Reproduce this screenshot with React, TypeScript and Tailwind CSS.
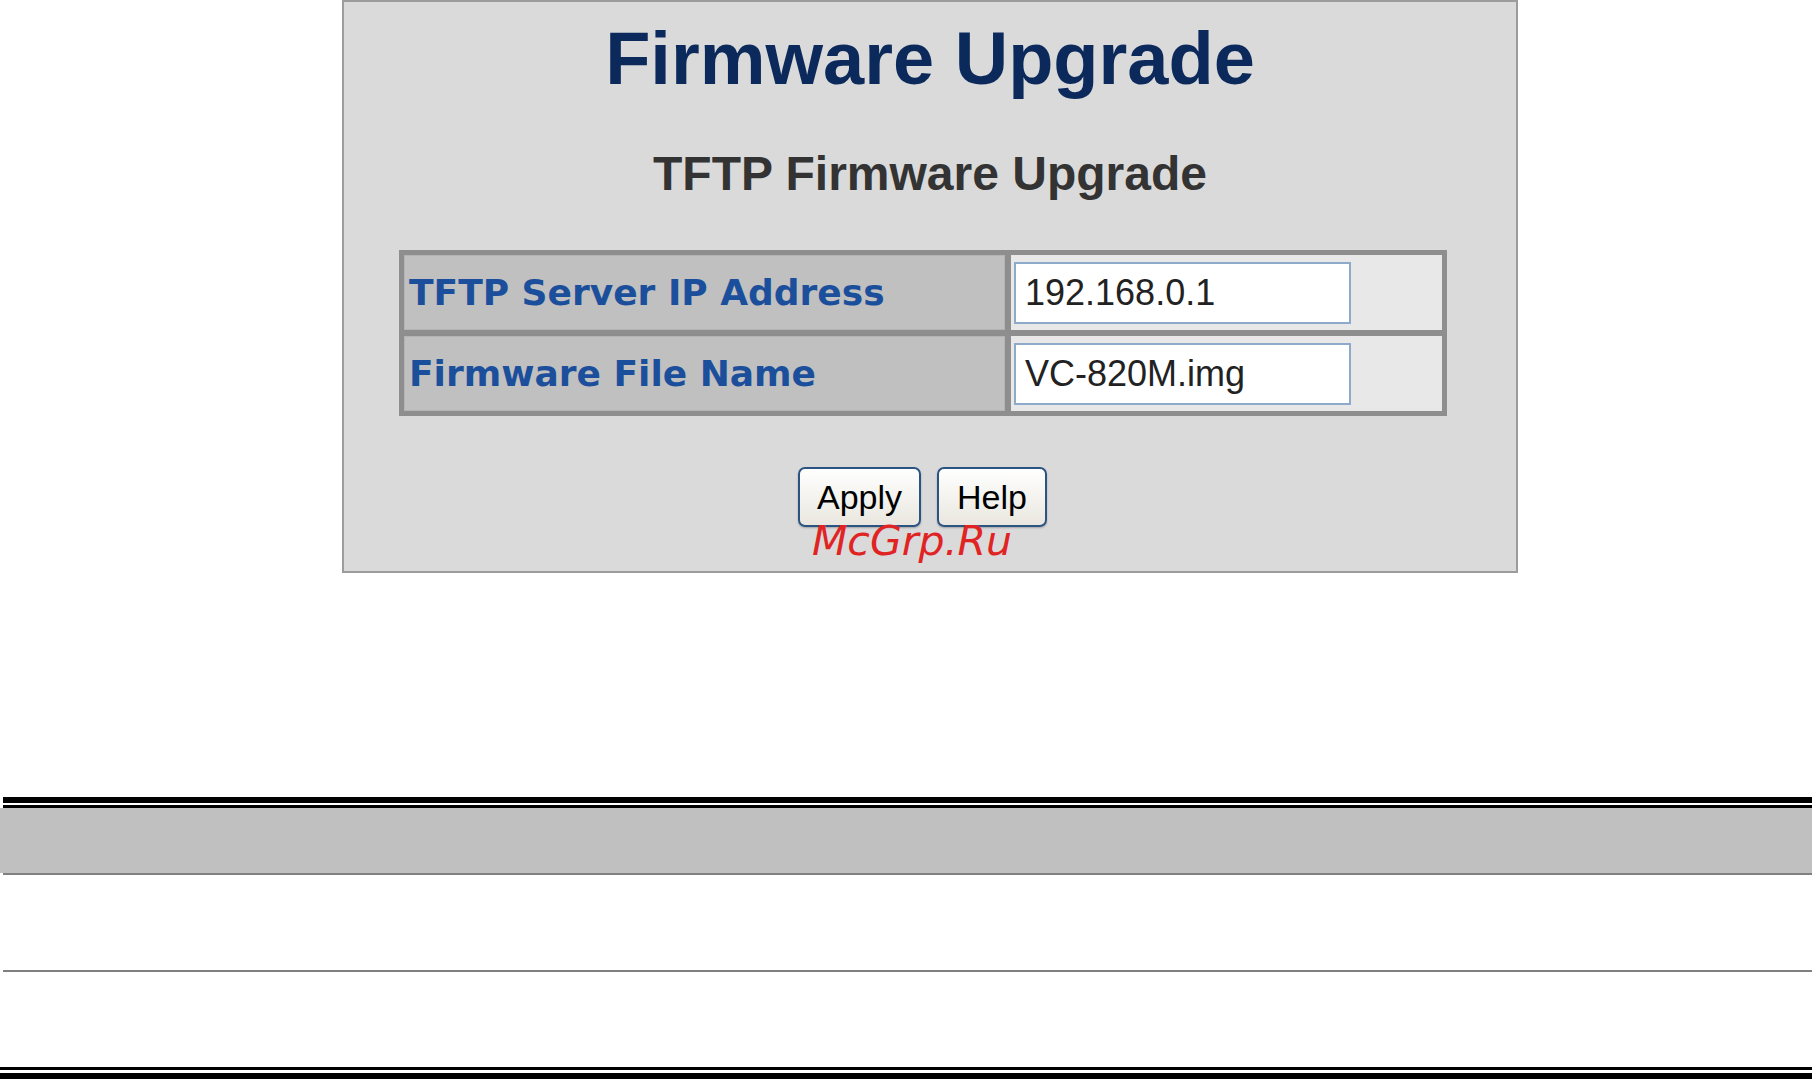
const rows = [
  { label: 'TFTP Server IP Address', value: '192.168.0.1' },
  { label: 'Firmware File Name', value: 'VC-820M.img' },
];

const FormRow = ({ label, value }: { label: string; value: string }) => (
  <>
    <div className="flex h-[75px] items-center border border-[#b4b4b4] bg-[#c0c0c0] pl-[4px]">
      <span className="font-['DejaVu_Sans',sans-serif] text-[36px] font-bold leading-none text-[#1b4f9c]">
        {label}
      </span>
    </div>
    <div className="flex h-[75px] items-center bg-[#e8e8e8] pl-[3px]">
      <input
        readOnly
        defaultValue={value}
        className="h-[62px] w-[337px] border-2 border-[#8eaacb] bg-white pl-[9px] font-['Liberation_Sans',Arial,sans-serif] text-[36px] leading-none text-[#222] outline-none"
      />
    </div>
  </>
);

const Button = ({ text, width }: { text: string; width: string }) => (
  <button
    className={`${width} h-[60px] rounded-[7px] border-2 border-[#2b5482] bg-gradient-to-b from-white to-[#e9e7df] font-['Liberation_Sans',Arial,sans-serif] text-[34px] leading-none text-black shadow-[0_1px_2px_rgba(0,0,0,0.25)]`}
  >
    {text}
  </button>
);

export default function App() {
  return (
    <div className="min-h-[1079px] w-full bg-white">
      <div className="relative ml-[342px] h-[573px] w-[1176px] border-2 border-[#9c9c9c] bg-[#dadada] pt-[20px]">
        <h1 className="text-center font-['Liberation_Sans',Arial,sans-serif] text-[74px] font-bold leading-none text-[#0b2a5b]">
          Firmware Upgrade
        </h1>
        <h2 className="mt-[54px] text-center font-['Liberation_Sans',Arial,sans-serif] text-[48px] font-bold leading-none text-[#333]">
          TFTP Firmware Upgrade
        </h2>

        <div className="ml-[55px] mt-[52px] grid w-[1048px] grid-cols-[601px_431px] gap-[6px] bg-[#8e8e8e] p-[5px]">
          {rows.map((r) => (
            <FormRow key={r.label} label={r.label} value={r.value} />
          ))}
        </div>

        <div className="mt-[51px] flex gap-[16px] pl-[454px]">
          <Button text="Apply" width="w-[123px]" />
          <Button text="Help" width="w-[110px]" />
        </div>

        <span className="absolute left-[468px] top-[519px] font-['DejaVu_Sans',sans-serif] text-[41px] italic leading-none text-[#e02424]">
          McGrp.Ru
        </span>
      </div>

      <div className="mt-[224px] flex flex-col">
        <div className="ml-[3px] h-[6px] bg-black" />
        <div className="h-[2px]" />
        <div className="ml-[3px] h-[3px] bg-black" />
        <div className="h-[65px] bg-[#c0c0c0]" />
        <div className="ml-[3px] h-[2px] bg-[#808080]" />
        <div className="h-[95px]" />
        <div className="ml-[3px] h-[2px] bg-[#808080]" />
        <div className="h-[95px]" />
        <div className="h-[3px] bg-black" />
        <div className="h-[3px]" />
        <div className="h-[6px] bg-black" />
      </div>
    </div>
  );
}
